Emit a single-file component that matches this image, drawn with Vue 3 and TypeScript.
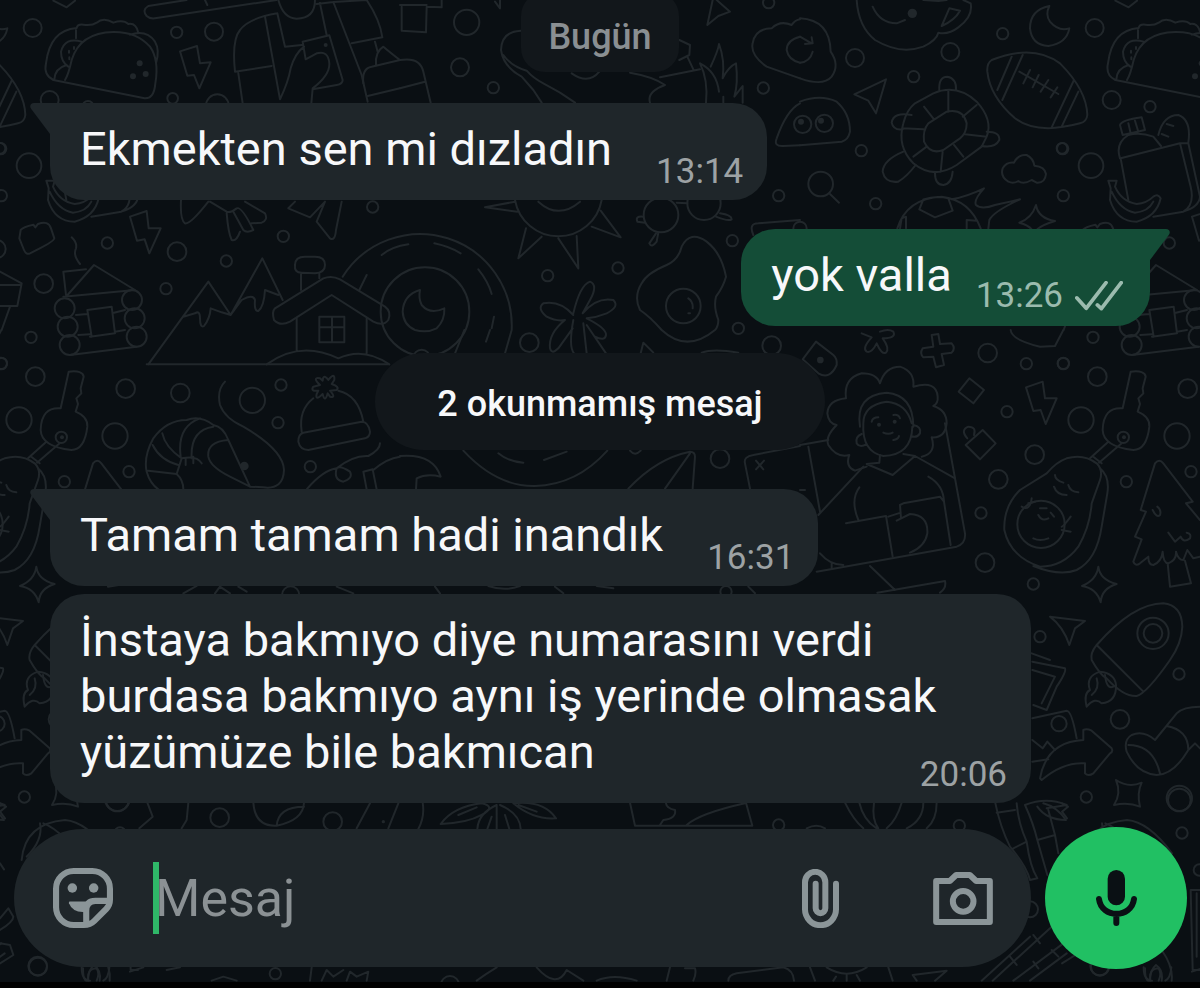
<script setup lang="ts">
import { ref } from 'vue'

interface Message {
  id: number
  text: string
  time: string
  outgoing: boolean
  tail: boolean
}

interface Sketch {
  x: number
  y: number
  paths: string[]
  rings: [number, number, number][]
  dots?: [number, number, number][]
}

const draft = ref('')

const readMessages: Message[] = [
  { id: 1, text: 'Ekmekten sen mi dızladın', time: '13:14', outgoing: false, tail: true },
  { id: 2, text: 'yok valla', time: '13:26', outgoing: true, tail: true },
]

const unreadMessages: Message[] = [
  { id: 3, text: 'Tamam tamam hadi inandık', time: '16:31', outgoing: false, tail: true },
  {
    id: 4,
    text: 'İnstaya bakmıyo diye numarasını verdi burdasa bakmıyo aynı iş yerinde olmasak yüzümüze bile bakmıcan',
    time: '20:06',
    outgoing: false,
    tail: false,
  },
]

// Wallpaper doodles, drawn at three units per pixel and grouped by region.
const sketches: Sketch[] = [
  {
    x: 0,
    y: 0,
    rings: [
      [98, 84, 27], [530, 97, 17], [642, 95, 27], [149, 300, 27], [518, 295, 16], [652, 317, 34],
      [87, 497, 37], [4, 587, 17], [1118, 621, 17], [850, 709, 17], [322, 729, 17], [531, 755, 28],
      [679, 783, 17], [131, 851, 28], [498, 866, 17], [-10, 747, 27], [0, 445, 16], [264, 320, 17],
      [194, 925, 30], [396, 900, 30], [203, 980, 30], [404, 955, 30], [209, 1035, 30], [410, 1010, 30],
    ],
    dots: [[419, 190, 9], [437, 222, 9], [399, 229, 9], [977, 135, 6]],
    paths: [
      'M160 240Q130 225 138 190Q150 90 230 84Q232 72 250 74Q275 78 290 68Q310 50 340 68Q370 58 385 72Q408 68 415 98M228 115V90M160 240L430 294Q462 300 466 250Q478 180 450 140Q410 95 340 96Q240 98 215 180Q205 225 195 240M390 104Q440 88 465 125Q480 150 468 190M245 125Q195 110 183 155Q183 185 205 200M163 238Q165 205 200 195M207 152v6M222 141v6M208 172v6',
      'M540 154L591 138L600 190L632 187L598 265L582 225L562 227Z',
      'M390 650L440 633L446 685L482 685L448 760L434 718L411 722Z',
      'M160 2L200 22L225 2M560 0L445 18Q425 30 440 48Q450 58 470 54L830 0M615 0L622 15',
      'M705 215Q695 120 720 90Q745 55 832 40M705 215L815 198M795 50L840 298Q865 245 872 205Q885 160 912 140M832 40L855 140L905 135M715 220L728 310M835 0Q850 55 890 56Q945 55 945 0M908 125L988 106L1028 240Q1028 252 1010 255L938 268M908 125L917 178L950 160Q985 150 988 190Q990 225 938 265L934 310M960 10L980 105M950 12L1000 6L1100 0Q1140 60 1147 112L1055 130M1000 6L1085 225L1103 305M1125 125L1133 155',
      'M1128 195Q1125 155 1150 140Q1180 165 1200 180M1103 288L1200 265M1090 250Q1085 205 1115 200L1200 180',
      'M62 690Q70 680 100 674L106 682L114 672Q145 660 153 685L163 715Q163 725 90 760Q78 765 72 750L58 715Z',
      'M215 712Q232 728 228 745Q218 765 240 792',
      'M200 888L282 795L405 870L190 890M198 885L190 815L258 808M228 945L262 942M342 938L375 930M262 930L335 920L345 1000M262 930L275 1010M210 1065L410 1040M270 1010L345 1000M235 1005L270 1003M345 995L375 990',
      'M445 1093L625 845L692 945L787 775L848 900M550 950L585 940Q600 930 600 955Q600 985 612 978Q630 955 632 925L665 937L692 945L725 900Q760 880 765 900Q762 935 775 933Q792 920 795 870L835 885M440 1093H1165',
      'M905 818Q882 818 885 795Q885 770 915 770H945Q975 770 975 795Q975 818 945 820ZM903 820V870M958 820V835',
      'M825 925L970 835Q995 825 1020 838L1155 920Q1175 935 1165 960Q1150 980 1120 965L995 885L870 965Q840 980 822 960Q815 935 825 925Z',
      'M890 955V1053M1100 955V1060M958 950H1033V1027H958ZM996 950V1027M958 982H1033M800 1093Q900 1020 1015 1075Q1090 1040 1168 1093',
      'M543 600Q540 660 555 670Q570 675 625 605M630 605L680 635Q690 640 710 625Q725 618 760 690Q740 700 730 690L700 635M680 640Q685 700 695 720Q710 725 720 695M735 605L795 640Q805 660 785 668L755 670M885 605L865 625L930 652L975 605L950 665L990 715Q1005 725 1008 690L1025 605',
    ],
  },
  {
    x: 400,
    y: 0,
    rings: [
      [200, 67, 38], [180, 202, 27], [280, 263, 17], [1106, 8, 17], [1090, 264, 17], [1136, 587, 17],
      [997, 722, 17], [654, 804, 17], [443, 827, 17], [783, 645, 52], [912, 610, 50], [850, 918, 52],
      [75, 935, 133], [1015, 985, 17],
    ],
    paths: [
      'M0 15H80M5 20V92L78 97L80 20L125 22V0M285 5L300 25V0M0 180Q60 170 70 215L92 308M0 265L75 245',
      'M362 92Q305 95 303 150Q310 200 365 230L400 270L425 308M310 165Q335 200 380 212Q400 235 430 250Q480 275 525 308M515 220Q565 255 598 215M690 218Q760 230 795 255Q740 275 750 308M780 232L900 208M862 170L880 208M838 180L868 165M838 120L870 135L868 165',
      'M900 190Q925 240 918 308M900 190Q950 215 957 275M932 200Q955 150 957 132Q975 180 968 235Q985 200 1008 190Q1015 250 1003 290L1028 258V308M970 290V308',
      'M938 0L922 75L955 48L990 35L950 0',
      'M1200 235L1100 200Q1050 165 1058 130Q1065 85 1115 85Q1140 60 1175 75Q1185 60 1200 58M1200 110Q1160 120 1160 150Q1165 180 1200 188',
      'M1200 310Q1160 330 1130 415Q1120 440 1150 438L1200 436',
      'M345 600A132 132 0 0 0 605 600M415 605Q475 660 540 605M345 605L255 622L352 635M378 685L355 775L425 710M475 715L535 805L530 708M575 680L662 712L602 632',
      'M830 608L862 610M728 650Q705 648 712 665L735 668M768 700L748 730Q755 745 770 725L775 698M960 640Q995 645 995 658Q985 665 948 650',
      'M520 940Q540 855 570 845Q595 855 570 900L548 940Q590 890 640 900Q660 920 620 940Q590 952 560 955Q620 985 618 1005Q615 1025 585 1010M520 945Q480 900 430 910Q410 925 440 950Q470 965 495 960Q445 1000 450 1045Q455 1065 475 1045L518 985M520 960Q505 1040 522 1060M550 970L560 1060M560 975L618 1060',
      'M785 990Q750 950 720 930Q700 890 725 850Q740 820 800 795Q835 780 845 740Q870 690 920 725Q965 760 978 830Q970 860 948 890Q940 920 955 960Q955 980 945 990Q860 1060 785 990M865 895Q880 905 878 925M865 940h5',
      'M1060 705Q1045 670 1075 670L1200 660',
      'M-172 830A275 275 0 0 1 335 990M-55 765Q-25 740 25 733M103 730Q150 740 182 760M235 808Q265 845 275 882M282 950L275 985M-100 825L-122 870M193 990L165 1060M270 990L258 1025M335 990L315 1060',
      'M60 870Q10 885 8 935Q10 975 45 990Q80 1000 110 985Q135 960 133 925Q90 945 65 915Q55 895 60 870Z',
    ],
  },
  {
    x: 800,
    y: 0,
    rings: [
      [165, 174, 27], [451, 156, 27], [341, 230, 17], [608, 101, 17], [788, 446, 17], [184, 452, 17],
      [227, 611, 17], [0, 685, 20], [62, 552, 37], [8, 373, 26], [73, 370, 26],
    ],
    dots: [[337, 40, 14], [63, 362, 9], [3, 365, 9]],
    paths: [
      'M90 582L117 608',
      'M0 55Q90 60 92 155Q120 195 95 230Q70 260 0 235M0 110L35 130M15 132L38 130L35 112M38 155Q30 185 0 188',
      'M0 305Q60 282 110 305Q150 340 150 395Q145 420 125 425L0 436',
      'M170 0Q175 80 225 120Q300 165 370 140Q410 120 415 98Q445 105 475 82Q520 50 512 10L490 0M218 20Q240 70 290 70L315 60M425 78L448 25L480 32Q465 60 425 78ZM370 0L415 3L440 0',
      'M748 18Q690 30 690 85Q695 135 745 138Q800 130 808 85Q775 95 750 65Q735 45 748 18Z',
      'M258 238L163 283L205 302L228 340Z',
      'M575 180Q700 130 780 190Q860 270 862 345Q860 365 840 370Q710 405 645 355Q570 290 562 215Q560 190 575 180ZM635 170L592 270M668 165L607 300M822 240L755 382M835 275L785 380M658 215L775 282M690 210L670 250M716 225L698 262M745 240L722 275M772 262L752 292',
      'M345 310L400 280Q470 250 530 305Q580 360 560 410L545 440L470 495Q400 540 340 490Q290 440 310 370Q320 330 345 310ZM385 370L440 335Q490 325 500 370Q500 400 480 415L430 450Q390 465 372 425Q368 390 385 370ZM445 270V335M530 315L488 350M560 410L495 403M490 470L462 435M422 515L428 455M340 470L380 440M308 385L370 388M372 320L402 358',
      'M418 272Q415 230 442 230Q470 235 468 270M335 345Q280 335 275 368Q280 392 308 388M560 395Q600 395 598 420Q585 445 545 438M310 455Q250 480 248 515Q255 550 295 545Q320 530 347 495M405 520Q405 555 430 555Q455 552 458 515',
      'M625 545Q600 530 608 505Q620 485 642 488Q655 462 680 465Q700 475 703 497Q735 500 738 522Q735 550 710 548L695 540Q670 555 655 543Q640 552 625 545Z',
      'M292 685Q320 595 425 590Q510 600 542 685M358 628L370 598Q410 585 445 595L458 632L405 652ZM300 685L305 655L318 650V685M500 685V660L530 662M455 598Q500 590 552 565Q520 600 528 615Q545 630 585 615Q630 605 660 598Q580 635 568 660L565 685',
      'M708 615Q715 655 765 663Q725 675 712 688M708 615Q695 655 658 668Q685 675 695 688',
      'M962 475L985 600M960 475Q945 430 985 405Q1020 395 1060 410L1083 438M962 475L1140 430L1165 430L1200 590M1140 430L1172 560Q1185 615 1150 635L1060 650M1200 590Q1198 620 1150 635M1165 428Q1175 360 1135 345Q1090 345 1075 405M1100 372L1120 378M1085 402L1105 410M968 405L960 375Q965 360 1025 352L1035 390ZM985 370L992 400M1005 362L1015 395',
      'M925 542H950L945 560Q965 605 1010 612Q1040 610 1060 590Q1075 580 1082 595Q1070 650 1010 665Q950 665 930 600L932 565ZM935 575Q960 630 1005 638Q1045 635 1060 605',
      'M786 815L851 850L838 918H786M786 855H846M816 920L791 990',
    ],
  },
  {
    x: 0,
    y: 330,
    rings: [
      [93, 22, 17], [4, 100, 17], [106, 140, 28], [377, 176, 28], [541, 189, 28], [757, 211, 38],
      [843, 165, 17], [834, 278, 17], [57, 270, 38], [345, 318, 38], [193, 455, 17], [387, 425, 17],
      [931, 410, 17], [872, 795, 26],
    ],
    dots: [[733, 408, 13]],
    paths: [
      'M675 155Q650 180 660 225Q675 265 730 290Q850 360 852 420Q850 480 790 472L750 470M685 330Q620 335 625 380Q630 410 690 440L750 470ZM685 330Q670 290 640 285Q600 255 560 270Q500 270 460 325Q430 380 440 425Q450 460 475 478M640 290Q570 300 575 385M600 265Q530 290 542 380M487 310Q495 350 545 385M458 345Q480 390 535 405M445 422L530 432Q550 450 550 478M530 432L545 385Q590 375 605 400M557 385V405M580 380V400',
      'M905 305Q895 240 940 205M1015 182Q1075 195 1090 275M910 308L1085 275Q1105 275 1110 305Q1110 320 1095 325L925 360Q900 360 895 335Q895 312 910 308Z',
      'M960 165Q935 140 960 145L968 152Q970 130 985 150Q1005 125 1003 150L995 162Q1020 170 1010 180L990 182Q1010 205 990 200L983 190Q975 220 968 192Q945 215 950 192L955 182Q930 185 940 170Z',
      'M920 478Q970 420 1010 415Q1060 375 1105 378Q1140 360 1140 340M1010 415Q1000 450 1030 455Q1060 445 1050 425Q1020 405 1010 415M1090 425L1118 418L1130 478M1090 425L1100 478M1120 420Q1160 385 1200 380',
      'M550 790L590 768M645 790L660 770L690 790M715 770L740 785M1010 770L1060 790',
    ],
  },
  {
    x: 400,
    y: 330,
    rings: [[388, 38, 28], [1115, 47, 28], [960, 386, 28], [65, 84, 25], [978, 785, 17]],
    paths: [
      'M0 378Q100 370 122 440Q80 430 50 445L48 478',
      'M722 70L730 38L760 68M905 68Q940 55 1015 68',
      'M190 362Q290 470 405 468Q530 465 622 362M295 370Q325 395 370 398M432 390L500 365M690 362Q705 380 722 362',
      'M685 476Q770 385 870 365Q885 365 885 380L878 476M870 370L795 476',
      'M1050 476L1035 400Q1030 380 1060 375L1200 348M1068 392L1090 418M1092 392L1068 418',
      'M105 770L120 790M265 768Q315 785 360 768M465 770L490 790M590 768L640 775M1045 770L1065 790',
    ],
  },
  {
    x: 800,
    y: 330,
    rings: [
      [563, 69, 28], [679, 101, 17], [790, 101, 17], [621, 245, 17], [704, 374, 28], [595, 448, 28],
      [543, 549, 17], [555, 698, 28], [700, 762, 17], [720, 920, 17], [723, 583, 71], [970, 322, 17],
      [1059, 910, 47], [1059, 910, 28],
    ],
    dots: [[61, 90, 10], [237, 284, 6], [284, 275, 6], [972, 322, 6]],
    paths: [
      'M48 35L8 88L55 130Q90 150 110 105Q112 85 100 75Z',
      'M185 10L215 22Q185 55 200 65Q215 70 230 40Q245 75 258 68Q270 55 248 25Q290 25 280 5Q265 -5 240 5',
      'M395 15L415 12L420 42L455 40Q468 55 455 68L425 72L432 105L408 112L400 80L370 82Q358 70 368 55L400 50Z',
      'M508 145L552 180L520 220L476 185Z',
      'M548 300L587 340L540 388L497 345ZM502 325Q480 300 505 290Q530 290 522 315',
      'M678 172L728 155L735 205L770 205L737 282L722 240L700 243Z',
      'M632 0Q635 30 720 50L765 48L790 0',
      'M0 345L85 330M25 350L60 545M55 555L190 410M50 725L470 650Q498 640 495 610L435 280M0 480H15',
      'M240 160Q230 130 185 130Q130 145 138 205Q85 210 82 250Q85 280 110 285Q75 320 85 345Q110 385 148 375Q135 410 165 422L200 410M240 160Q255 110 300 110Q345 125 340 170Q410 150 413 200Q415 220 400 228Q440 240 440 280Q435 325 395 322Q410 370 365 380',
      'M180 290Q165 195 260 188Q340 195 340 290M190 280Q190 225 260 215Q320 220 335 280M190 280Q185 365 250 378Q335 375 337 290M340 285Q365 290 360 310Q350 325 333 318M185 312Q165 320 170 340Q180 355 200 342M215 275Q218 262 235 262M280 255Q295 252 300 265M250 308Q265 315 278 308M280 330Q295 328 297 318',
      'M240 375L238 398L200 402L278 435L345 378L310 372M345 378L465 445M385 440Q430 465 432 515L452 645M178 472Q150 510 175 570M138 580L258 558L278 680M303 565L300 525L310 520L420 500L432 515M265 560L302 548M290 572L330 552Q385 555 382 610Q375 650 330 668M60 670Q90 705 130 705M95 700V715M210 708L285 780M232 788L435 753Q440 775 420 788',
      'M800 385Q850 370 890 400Q910 420 900 450L875 520Q870 590 835 650Q790 710 720 710Q630 680 613 600Q610 530 660 480L740 430Q770 395 800 385ZM900 415Q930 440 922 490L905 590Q890 690 830 720Q780 740 700 708',
      'M765 435Q765 450 790 458M762 470Q770 495 800 495M805 465Q810 485 835 487M720 535h20M715 555Q725 575 745 565M752 548L762 560M700 625Q720 635 745 625M665 530Q690 545 695 505M812 560Q790 590 785 590M785 600L812 605M685 520L705 515',
      'M968 235L992 125Q1035 120 1037 140L1028 175L1030 190L1015 205L1020 222L1013 245Q1050 260 1048 290Q1040 360 1000 360Q910 350 908 300Q910 230 968 235ZM870 385L925 335M897 398L965 340M880 380L905 400',
      'M1065 400Q1078 385 1090 400L1178 515L1158 520L1200 570M1065 400L1022 540L1038 545L1005 620L1025 628L1000 695Q1005 710 1020 700L1045 680Q1045 705 1060 705Q1085 695 1088 665Q1090 700 1105 700Q1130 690 1128 665Q1135 690 1150 690L1162 660L1180 685L1200 680M1058 540Q1070 565 1080 555Q1085 540 1072 530M1105 608L1125 635L1142 620Q1150 640 1170 625Q1175 610 1160 608M1103 700L1110 770L1173 760L1155 692',
      'M895 710Q900 750 950 762Q905 775 902 817Q890 775 846 768Q890 750 895 710Z',
      'M750 860L855 873L825 895L808 945Q790 890 750 860Z',
      'M890 945Q1000 820 1090 820Q1145 825 1147 890Q1145 940 1110 990Q1040 1090 1010 1098Q970 1100 920 1045Q900 1035 875 990Q870 970 890 945L1030 1085M695 970L750 990',
    ],
  },
  {
    x: 0,
    y: 660,
    rings: [[113, 918, 28], [352, 420, 34], [659, 473, 28], [998, 485, 28], [826, 941, 17]],
    dots: [[1150, 485, 5]],
    paths: [
      'M65 600Q75 490 195 480Q260 485 330 580M80 590Q130 540 120 490M130 490Q160 500 200 540',
      'M442 428L458 470L418 505M565 428L560 480L545 505M760 428Q765 500 830 497Q910 480 912 428M830 497Q835 440 912 440M1110 430L1070 505M1195 430L1165 505',
      'M245 922Q245 962 270 962M328 922Q325 955 310 962M265 962Q260 925 290 925Q300 940 290 962M390 935L430 922M500 930L540 922M635 962L670 950L710 962M935 922L930 962M965 962L980 930L1000 950L1030 930M1040 962L1050 935L1070 950L1105 935L1100 962',
      'M0 775L25 745L40 770Q40 785 0 810M0 850L30 855L40 885L0 910M0 610L12 628M0 430L18 440L0 455L15 475',
    ],
  },
  {
    x: 400,
    y: 660,
    rings: [[1136, 495, 17], [150, 975, 27]],
    paths: [
      'M68 428Q75 470 55 507M122 492Q160 440 245 430Q290 440 245 465Q200 490 122 492M175 465L230 442M340 430Q430 420 468 475Q400 480 340 430M355 435L410 455M290 435Q235 460 232 507M290 435V507M300 435Q360 460 362 507M262 507L275 470M328 507L315 465',
      'M690 428L705 497H1057L1038 428M798 430Q800 445 825 450Q830 475 790 480L780 495M860 495Q900 460 1035 430',
      'M290 922Q260 940 230 962M410 922Q470 990 500 930L550 962M590 962Q640 940 710 962M810 922L800 962M855 925L885 925Q890 940 880 962M985 962Q985 945 1010 940L1150 922Q1180 930 1182 962',
    ],
  },
  {
    x: 800,
    y: 660,
    rings: [
      [1137, 42, 17], [960, 178, 28], [777, 191, 23], [859, 411, 17], [1138, 415, 38], [1146, 519, 17],
      [1198, 630, 17], [478, 497, 17], [690, 748, 24], [900, 920, 27],
    ],
    paths: [
      'M860 140Q850 100 870 90Q855 50 900 35Q945 40 948 75Q950 125 905 130Q885 110 860 140M875 105Q900 85 890 55M915 45Q920 90 940 80',
      'M697 5L795 25Q800 35 770 80L740 150L700 135M697 30L765 50L725 130M697 175L800 152Q815 152 830 235M697 240L728 265L742 245L765 270M697 305L745 298',
      'M720 355Q740 245 850 240V210Q860 205 875 212L935 265Q940 275 930 280L880 340Q865 350 855 340V310Q790 305 725 360Z',
      'M1065 240L1130 160Q1150 140 1200 140M1065 240Q1030 210 995 225Q970 240 980 275Q1010 340 1070 345Q1120 345 1165 270L1185 250L1200 265M985 255Q1060 255 1080 340M1100 198Q1165 210 1165 270',
      'M948 360Q985 385 1025 368Q1010 400 1020 440Q985 425 942 435Q965 400 948 360Z',
      'M585 425Q600 500 630 560M590 458L645 450M650 430Q655 490 680 545L640 565M630 560Q680 620 690 660L712 655Q690 620 680 545M675 435Q700 490 712 540L765 525L745 450M675 435Q740 410 800 435L740 445M712 440Q740 480 798 480Q770 440 730 430M712 540L742 645M765 525L775 580',
      'M135 428Q160 480 190 505M178 428Q190 480 230 505M222 428Q215 480 235 505M305 428Q290 480 260 505M370 428Q370 480 320 505M410 428Q410 480 380 505M20 505Q50 490 75 505',
      'M545 962L690 830M578 962L755 800M700 825L720 850M630 890L650 915M700 905L715 925M690 962L800 880M640 962L790 850M755 870L775 890',
      'M1200 690H1172L1178 930H1200M1190 700V890M1085 870Q1120 920 1115 962M1035 925Q1035 962 1045 962M1050 962Q1050 930 1068 915Q1090 930 1085 962',
      'M30 922L45 962M80 922Q140 960 200 922M100 962L108 950M140 945V962M170 945L180 962M265 922L278 962M350 962L338 945L440 932L405 962',
    ],
  },
]
</script>

<template>
  <main class="screen">
    <svg class="wallpaper" viewBox="0 0 1200 988" preserveAspectRatio="xMidYMin slice" aria-hidden="true">
      <defs>
        <g id="doodles">
          <g v-for="(s, i) in sketches" :key="i" :transform="`translate(${s.x} ${s.y}) scale(0.33333)`">
            <path v-for="(d, j) in s.paths" :key="j" :d="d" />
            <circle v-for="(c, j) in s.rings" :key="'r' + j" :cx="c[0]" :cy="c[1]" :r="c[2]" />
            <circle v-for="(c, j) in s.dots ?? []" :key="'d' + j" class="dot" :cx="c[0]" :cy="c[1]" :r="c[2]" />
          </g>
        </g>
      </defs>
      <use href="#doodles" x="-1062" />
      <use href="#doodles" />
      <use href="#doodles" x="1062" />
    </svg>

    <section class="thread">
      <div class="day">Bugün</div>

      <template v-for="(group, g) in [readMessages, unreadMessages]" :key="g">
        <div v-if="g === 1" class="unread">2 okunmamış mesaj</div>
        <div class="group" :class="{ close: g === 1 }">
          <article v-for="m in group" :key="m.id" class="bubble" :class="{ outgoing: m.outgoing, tailed: m.tail }">
            <svg v-if="m.tail" class="tail" viewBox="0 0 22 32" aria-hidden="true">
              <path d="M22 0H4C0 0-1 4 2 7L20 31H22Z" />
            </svg>
            <span class="text">{{ m.text }}</span>
            <span class="meta">
              <time>{{ m.time }}</time>
              <svg v-if="m.outgoing" class="ticks" viewBox="828 833 142 89" role="img" aria-label="İletildi">
                <path d="M833 883L861 914L920 838M894 904L906 915L965 838" />
              </svg>
            </span>
          </article>
        </div>
      </template>
    </section>

    <form class="composer" @submit.prevent>
      <div class="field">
        <button type="button" class="icon" aria-label="Çıkartma">
          <svg class="sticker" viewBox="69 54 177 177">
            <path d="M160 222H130A52 52 0 0 1 78 170V115A52 52 0 0 1 130 63H185A52 52 0 0 1 237 115V148Q237 164 226 175L191 210Q179 222 160 222ZM235 151H194Q167 151 167 180V220" />
            <path class="solid" d="M118 153H182L168 183Q128 188 116 158Q115 153 118 153Z" />
            <circle class="solid" cx="126" cy="113" r="14" />
            <circle class="solid" cx="189" cy="113" r="14" />
          </svg>
        </button>
        <div class="entry">
          <span class="caret"></span>
          <input v-model="draft" type="text" placeholder="Mesaj" aria-label="Mesaj" />
        </div>
        <button type="button" class="icon" aria-label="Ekle">
          <svg class="clip" viewBox="66 54 111 177">
            <path d="M168 98V175A46 47 0 0 1 75 175V94A30 31 0 0 1 136 94V172A14 14 0 0 1 107 172V98" />
          </svg>
        </button>
        <button type="button" class="icon camera-button" aria-label="Kamera">
          <svg class="camera" viewBox="459 63 179 159">
            <path d="M468 90H509L528 72H569L588 90H629V213H468Z" />
            <circle cx="549" cy="151" r="31" />
          </svg>
        </button>
      </div>
      <button type="button" class="mic" aria-label="Sesli mesaj">
        <svg viewBox="168 144 123 168">
          <rect x="203" y="144" width="52" height="106" rx="26" />
          <path d="M177 231C184 290 275 290 282 231M229 275V303" />
        </svg>
      </button>
    </form>
  </main>
</template>

<style>
body {
  margin: 0;
  background: #000;
}
</style>

<style scoped>
.screen {
  position: relative;
  box-sizing: border-box;
  display: flex;
  flex-direction: column;
  min-height: 100vh;
  border-bottom: 7px solid #000;
  background: #0a0f13;
  color: #f7f8fa;
  font-family: Roboto, "Noto Sans", sans-serif;
  overflow: hidden;
}

.wallpaper {
  position: absolute;
  inset: 0;
  width: 100%;
  height: 100%;
  fill: none;
  stroke: #21272b;
  stroke-width: 6;
  stroke-linecap: round;
  stroke-linejoin: round;
}

.wallpaper .dot {
  fill: #21272b;
  stroke: none;
}

.thread {
  position: relative;
  flex: 1;
  display: flex;
  flex-direction: column;
  align-items: center;
}

.day {
  margin-top: -8px;
  padding: 24px 27px 14px;
  border-radius: 24px;
  background: #12171b;
  color: #8a8f92;
  font-size: 36px;
  font-weight: 500;
  line-height: 42px;
}

.unread {
  margin-top: 27px;
  padding: 30px 62px 25px;
  border-radius: 49px;
  background: #12171b;
  font-size: 36px;
  font-weight: 500;
  line-height: 42px;
}

.group {
  box-sizing: border-box;
  align-self: stretch;
  display: flex;
  flex-direction: column;
  align-items: flex-start;
  gap: 29px;
  margin-top: 31px;
  padding: 0 50px;
}

.group.close {
  gap: 8px;
  margin-top: 39px;
}

.bubble {
  position: relative;
  display: flow-root;
  box-sizing: border-box;
  max-width: calc(100% - 119px);
  padding: 18px 24px 7px 30px;
  border-radius: 34px;
  background: #1f262a;
  font-size: 47px;
  line-height: 56px;
}

.bubble.tailed {
  border-top-left-radius: 0;
}

.bubble.outgoing {
  align-self: flex-end;
  border-radius: 34px 0 34px 34px;
  background: #144d37;
}

.tail {
  position: absolute;
  top: 0;
  left: -20px;
  width: 22px;
  height: 32px;
  fill: #1f262a;
}

.outgoing .tail {
  left: auto;
  right: -20px;
  transform: scaleX(-1);
  fill: #144d37;
}

.meta {
  float: right;
  display: flex;
  align-items: center;
  gap: 12px;
  margin: 30px 0 0 44px;
  color: #9da2a4;
  font-size: 35px;
  line-height: 42px;
}

.outgoing .meta {
  margin: 28px 3px 2px 24px;
  color: #9bbbae;
}

.ticks {
  width: 48px;
  height: 30px;
  fill: none;
  stroke: #9bbbae;
  stroke-width: 11;
  stroke-linecap: round;
  stroke-linejoin: round;
}

.composer {
  position: relative;
  display: flex;
  align-items: center;
  gap: 14px;
  padding: 24px 13px 13px 14px;
}

.field {
  flex: 1;
  box-sizing: border-box;
  display: flex;
  align-items: center;
  min-width: 0;
  height: 138px;
  padding: 0 38px 0 39px;
  border-radius: 69px;
  background: #1f262a;
}

button {
  display: flex;
  align-items: center;
  justify-content: center;
  flex: none;
  padding: 0;
  border: 0;
  background: none;
  cursor: pointer;
}

.icon svg {
  fill: none;
  stroke: #8b9598;
  stroke-width: 18;
  stroke-linecap: round;
  stroke-linejoin: round;
}

.icon .solid {
  fill: #8b9598;
  stroke: none;
}

.sticker {
  width: 60px;
  height: 60px;
}

.clip {
  width: 37px;
  height: 59px;
}

.camera {
  width: 60px;
  height: 53px;
}

.camera-button {
  margin-left: 94px;
}

.entry {
  position: relative;
  flex: 1;
  min-width: 0;
  margin: 0 24px 0 40px;
}

.caret {
  position: absolute;
  top: 0;
  left: 0;
  width: 6px;
  height: 72px;
  background: #2fb768;
}

input {
  display: block;
  box-sizing: border-box;
  width: 100%;
  height: 72px;
  padding: 0 0 0 2px;
  border: 0;
  outline: 0;
  background: none;
  color: #f7f8fa;
  font: 52px Roboto, "Noto Sans", sans-serif;
}

input::placeholder {
  color: #8b9194;
  opacity: 1;
}

.mic {
  width: 142px;
  height: 142px;
  border-radius: 50%;
  background: #21c063;
}

.mic svg {
  width: 41px;
  height: 56px;
  fill: #0a1014;
}

.mic path {
  fill: none;
  stroke: #0a1014;
  stroke-width: 18;
  stroke-linecap: round;
}
</style>
